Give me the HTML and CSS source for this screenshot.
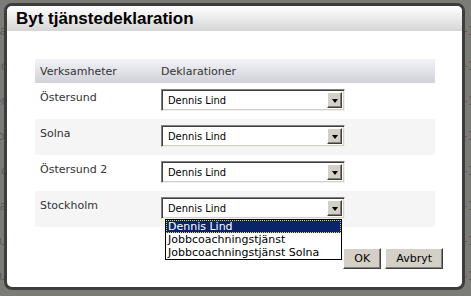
FILE: index.html
```html
<!DOCTYPE html>
<html lang="sv">
<head>
    <meta charset="UTF-8">
    <title>Byt tjänstedeklaration</title>
    <link rel="stylesheet" href="styles.css">
</head>
<body>
    <div class="page">
        <div class="page-row"><span class="pc-a">Tjänsteintyg Östersund</span><span class="pc-b">Granskad</span><span class="pc-c">2012-05-20</span><span class="pc-d">19460801-1208</span></div>
        <div class="page-row"><span class="pc-a">Jobbcoachning Solna (e</span><span class="pc-b">Granskad</span><span class="pc-c">2012-05-21</span><span class="pc-d">19460801-1208</span></div>
        <div class="page-row"><span class="pc-a">Tjänsteintyg Stockholm</span><span class="pc-b">Ny</span><span class="pc-c">2012-05-22</span><span class="pc-d">19460801-1208</span></div>
        <div class="page-row"><span class="pc-a">Jobbcoachning Östersund o</span><span class="pc-b">Ny</span><span class="pc-c">2012-05-23</span><span class="pc-d">19460801-1208</span></div>
        <div class="page-row"><span class="pc-a">Tjänsteintyg Solna o</span><span class="pc-b">Ny</span><span class="pc-c">2012-05-24</span><span class="pc-d">19460801-1208</span></div>
        <div class="page-row"><span class="pc-a">Tjänsteintyg Stockholm er</span><span class="pc-b">Ny</span><span class="pc-c">2012-05-25</span><span class="pc-d">19460801-1208</span></div>
        <div class="page-row"><span class="pc-a">Jobbcoachning Solna</span><span class="pc-b">Ny</span><span class="pc-c">2012-05-26</span><span class="pc-d">19460801-1208</span></div>
        <div class="page-row"><span class="pc-a">Tjänsteintyg Östersund</span><span class="pc-b">Ny</span><span class="pc-c">2012-05-27</span><span class="pc-d">19460801-1208</span></div>
        <div class="page-row"><span class="pc-a">Tjänsteintyg Östersund</span><span class="pc-b">Ny</span><span class="pc-c">2012-05-28</span><span class="pc-d">19460801-1208</span></div>
    </div>

    <div class="dialog">
        <div class="dialog-title">Byt tjänstedeklaration</div>
        <div class="dialog-body">
            <table class="decl-table">
                <tr>
                    <th class="col-unit">Verksamheter</th>
                    <th>Deklarationer</th>
                </tr>
                <tr>
                    <td class="col-unit">Östersund</td>
                    <td><div class="combo"><span class="combo-text">Dennis Lind</span><span class="combo-btn"></span></div></td>
                </tr>
                <tr class="alt">
                    <td class="col-unit">Solna</td>
                    <td><div class="combo"><span class="combo-text">Dennis Lind</span><span class="combo-btn"></span></div></td>
                </tr>
                <tr>
                    <td class="col-unit">Östersund 2</td>
                    <td><div class="combo"><span class="combo-text">Dennis Lind</span><span class="combo-btn"></span></div></td>
                </tr>
                <tr class="alt">
                    <td class="col-unit">Stockholm</td>
                    <td>
                        <div class="combo open">
                            <span class="combo-text">Dennis Lind</span><span class="combo-btn"></span>
                            <ul class="combo-list">
                                <li class="selected">Dennis Lind</li>
                                <li>Jobbcoachningstjänst</li>
                                <li>Jobbcoachningstjänst Solna</li>
                            </ul>
                        </div>
                    </td>
                </tr>
            </table>
            <div class="dialog-buttons">
                <button class="btn btn-ok">OK</button>
                <button class="btn">Avbryt</button>
            </div>
        </div>
    </div>
</body>
</html>
```

FILE: styles.css
```css
body {
    margin: 0;
    background: #7b7b77;
    font-family: 'DejaVu Sans', Verdana, sans-serif;
    font-size: 11px;
    overflow: hidden;
    height: 296px;
    position: relative;
}
.page {
    margin-top: -22px;
    margin-left: -118px;
    color: #5c5c59;
    font-size: 12px;
}
.page-row {
    display: flex;
    height: 35px;
    align-items: center;
    white-space: nowrap;
}
.pc-a {
    width: 300px;
    flex: none;
}
.pc-b {
    width: 100px;
    flex: none;
}
.pc-c {
    width: 120px;
    flex: none;
}
.pc-d {
    flex: none;
}

.dialog {
    position: absolute;
    left: 4px;
    top: 3px;
    width: 455px;
    height: 281px;
    border: 3px solid #3d3d3d;
    border-radius: 8px;
    background: #fff;
    overflow: hidden;
}
.dialog-title {
    height: 25px;
    line-height: 25px;
    padding-left: 9px;
    font-family: 'Liberation Sans', Arial, sans-serif;
    font-weight: bold;
    font-size: 17px;
    color: #000;
    background: linear-gradient(#ffffff, #f2f2f2 30%, #d6d6d6);
}
.dialog-body {
    padding: 28px 19px 0 28px;
}

.decl-table {
    width: 400px;
    border-collapse: collapse;
    color: #333;
}
.decl-table th {
    height: 24px;
    padding: 0 0 0 5px;
    text-align: left;
    font-weight: normal;
    background: linear-gradient(#f3f3f7, #d0d1d9);
}
.decl-table td {
    height: 36px;
    padding: 0 0 0 5px;
    vertical-align: top;
    box-sizing: border-box;
}
.decl-table td.col-unit {
    padding-top: 8px;
}
.decl-table .col-unit {
    width: 116px;
}
.decl-table tr.alt td {
    background: #f5f5f5;
}

.combo {
    position: relative;
    margin-top: 6px;
    width: 184px;
    height: 22px;
    box-sizing: border-box;
    border: 1px solid;
    border-color: #808080 #f0efea #f0efea #808080;
    box-shadow: inset 1px 1px 0 #404040, inset -1px -1px 0 #d4d0c8;
    background: #fff;
    display: flex;
    align-items: center;
    justify-content: space-between;
}
.combo-text {
    padding-left: 6px;
    font-stretch: condensed;
    color: #000;
}
.combo-btn {
    width: 15px;
    height: 16px;
    margin-right: 2px;
    box-sizing: border-box;
    background: #d4d0c8;
    border: 1px solid;
    border-color: #fff #404040 #404040 #fff;
    box-shadow: inset -1px -1px 0 #808080;
    display: flex;
    align-items: center;
    justify-content: center;
}
.combo-btn::after {
    content: "";
    border-left: 3px solid transparent;
    border-right: 3px solid transparent;
    border-top: 4px solid #000;
    margin-top: 1px;
}

.combo-list {
    position: absolute;
    left: 3px;
    top: 21px;
    width: 177px;
    margin: 0;
    padding: 0;
    list-style: none;
    border: 1px solid #000;
    background: #fff;
    color: #000;
    box-sizing: border-box;
}
.combo-list li {
    height: 13px;
    line-height: 13px;
    padding-left: 2px;
    white-space: nowrap;
}
.combo-list li.selected {
    background: #0a246a;
    color: #fff;
    outline: 1px dotted #e8d27a;
    outline-offset: -1px;
}

.dialog-buttons {
    display: flex;
    justify-content: flex-end;
    gap: 4px;
    margin-top: 21px;
}
.btn {
    height: 21px;
    padding: 0 10px;
    font-family: 'DejaVu Sans', Verdana, sans-serif;
    font-size: 11px;
    color: #000;
    background: #d4d0c8;
    border: 1px solid;
    border-color: #fff #404040 #404040 #fff;
    box-shadow: inset -1px -1px 0 #808080;
}
.btn-ok {
    width: 38px;
    padding: 0;
}
```
